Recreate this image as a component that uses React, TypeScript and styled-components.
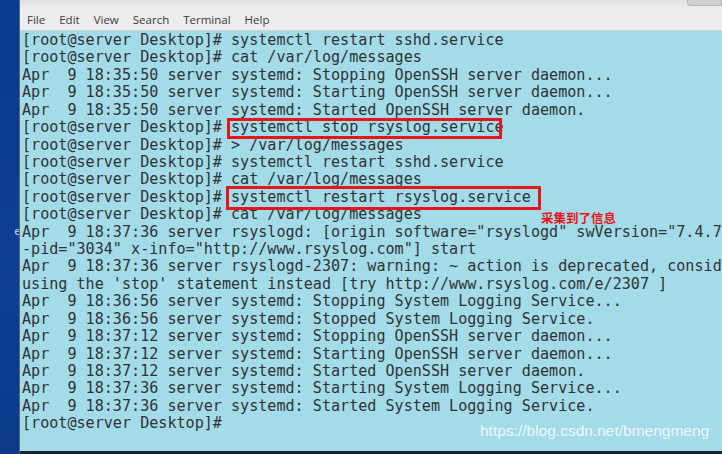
import React from "react";
import styled, { createGlobalStyle } from "styled-components";

const Global = createGlobalStyle`
  html, body { margin: 0; padding: 0; background: #0c3b8d; }
  body { width: 722px; height: 454px; overflow: hidden; }
`;

const Screen = styled.div`
  display: flex;
  width: 722px;
  height: 454px;
  overflow: hidden;
  background: #0c3b8d;
`;

const DesktopStrip = styled.div`
  width: 19px;
  flex: none;
  display: flex;
  flex-direction: column;
  align-items: flex-end;
  padding-top: 225px;
  box-sizing: border-box;
  background: linear-gradient(180deg, #0a3a8c 0%, #0d3f93 60%, #0b3a8a 100%);
`;

const DesktopLabel = styled.span`
  font-family: "DejaVu Sans", sans-serif;
  font-size: 11px;
  color: #d5dbe6;
  line-height: 14px;
  margin-right: -2px;
`;

const Window = styled.div`
  flex: 1;
  display: flex;
  flex-direction: column;
  min-width: 0;
  border-left: 1px solid #5a6570;
`;

const TitleBar = styled.div`
  height: 9px;
  flex: none;
  display: flex;
  justify-content: flex-end;
  background: linear-gradient(180deg, #e2e2e2, #ececec);
`;

const WindowButton = styled.div`
  width: 33px;
  height: 5px;
  background: #cfcfcf;
  border: 1px solid #b4b4b4;
  border-top: none;
  border-radius: 0 0 0 4px;
`;

const MenuBar = styled.div`
  height: 21px;
  flex: none;
  display: flex;
  align-items: center;
  gap: 14px;
  padding-left: 7px;
  background: #ededed;
  border-bottom: 1px solid #d2d2d2;
`;

const MenuItem = styled.span`
  font-family: "Open Sans", "DejaVu Sans", sans-serif;
  font-size: 11.5px;
  color: #3a3a3a;
  line-height: 14px;
`;

const Terminal = styled.div`
  position: relative;
  flex: 1;
  background: #a4dbe8;
  padding: 1px 0 0 2px;
  overflow: hidden;
  border-bottom: 1px solid #c9d3d8;
`;

const Line = styled.div`
  font-family: "DejaVu Sans Mono", monospace;
  font-size: 15.1px;
  line-height: 17.42px;
  color: #2e3436;
  white-space: pre;
`;

const Highlight = styled.div<{ $l: number; $t: number; $w: number; $h: number }>`
  position: absolute;
  left: ${(p) => p.$l}px;
  top: ${(p) => p.$t}px;
  width: ${(p) => p.$w}px;
  height: ${(p) => p.$h}px;
  border: 3px solid #e8141c;
  box-sizing: border-box;
`;

const Note = styled.div`
  position: absolute;
  left: 521px;
  top: 180px;
  font-family: "Noto Sans CJK SC", sans-serif;
  font-weight: 700;
  font-size: 12.5px;
  color: #e8141c;
  line-height: 13px;
`;

const Watermark = styled.div`
  position: absolute;
  left: 460px;
  top: 391px;
  font-family: "Liberation Sans", Arial, sans-serif;
  font-size: 15.5px;
  color: rgba(255, 255, 255, 0.82);
  line-height: 18px;
`;

const BottomBar = styled.div`
  height: 3px;
  flex: none;
  background: #0e2448;
`;

const P = "[root@server Desktop]# ";

const lines = [
  P + "systemctl restart sshd.service",
  P + "cat /var/log/messages",
  "Apr  9 18:35:50 server systemd: Stopping OpenSSH server daemon...",
  "Apr  9 18:35:50 server systemd: Starting OpenSSH server daemon...",
  "Apr  9 18:35:50 server systemd: Started OpenSSH server daemon.",
  P + "systemctl stop rsyslog.service",
  P + "> /var/log/messages",
  P + "systemctl restart sshd.service",
  P + "cat /var/log/messages",
  P + "systemctl restart rsyslog.service",
  P + "cat /var/log/messages",
  'Apr  9 18:37:36 server rsyslogd: [origin software="rsyslogd" swVersion="7.4.7" x',
  '-pid="3034" x-info="http://www.rsyslog.com"] start',
  "Apr  9 18:37:36 server rsyslogd-2307: warning: ~ action is deprecated, consider",
  "using the 'stop' statement instead [try http://www.rsyslog.com/e/2307 ]",
  "Apr  9 18:36:56 server systemd: Stopping System Logging Service...",
  "Apr  9 18:36:56 server systemd: Stopped System Logging Service.",
  "Apr  9 18:37:12 server systemd: Stopping OpenSSH server daemon...",
  "Apr  9 18:37:12 server systemd: Starting OpenSSH server daemon...",
  "Apr  9 18:37:12 server systemd: Started OpenSSH server daemon.",
  "Apr  9 18:37:36 server systemd: Starting System Logging Service...",
  "Apr  9 18:37:36 server systemd: Started System Logging Service.",
  P,
];

const menus = ["File", "Edit", "View", "Search", "Terminal", "Help"];

export default function App() {
  return (
    <>
      <Global />
      <Screen>
        <DesktopStrip>
          <DesktopLabel>e</DesktopLabel>
        </DesktopStrip>
        <Window>
          <TitleBar>
            <WindowButton />
          </TitleBar>
          <MenuBar>
            {menus.map((m) => (
              <MenuItem key={m}>{m}</MenuItem>
            ))}
          </MenuBar>
          <Terminal>
            {lines.map((l, i) => (
              <Line key={i}>{l}</Line>
            ))}
            <Highlight $l={207} $t={87} $w={275} $h={21} />
            <Highlight $l={206} $t={155} $w={315} $h={24} />
            <Note>采集到了信息</Note>
            <Watermark>https://blog.csdn.net/bmengmeng</Watermark>
          </Terminal>
          <BottomBar />
        </Window>
      </Screen>
    </>
  );
}
